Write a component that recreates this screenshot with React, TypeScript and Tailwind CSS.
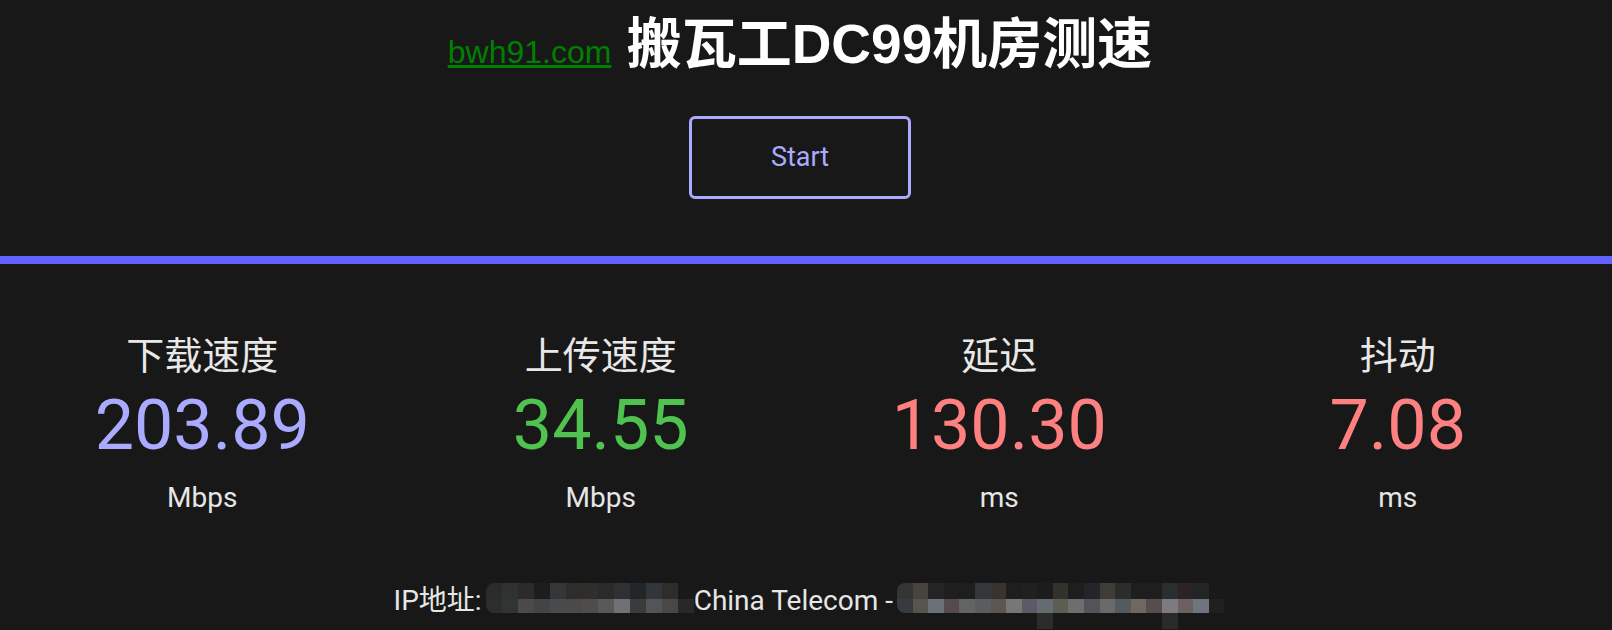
import React from "react";

const STATS = [
  { label: "下载速度", value: "203.89", unit: "Mbps", color: "text-[#aaaaff]" },
  { label: "上传速度", value: "34.55", unit: "Mbps", color: "text-[#4fc24f]" },
  { label: "延迟", value: "130.30", unit: "ms", color: "text-[#ff8080]" },
  { label: "抖动", value: "7.08", unit: "ms", color: "text-[#ff8080]" },
];

// pixelated (redacted) blocks in the IP line
const MOSAIC_IP = {
  top: ["#2a2b2b", "#303131", "#2b2b2b", "#1d1d1d", "#34373a", "#2e2d2c", "#302e2b", "#2a2a2a", "#2f3033", "#232627", "#32353a", "#2f2d2b", "#191919"],
  bot: ["#2c2e2e", "#303434", "#4d4947", "#434446", "#494a4c", "#4a4a4a", "#4f4d4b", "#595959", "#707174", "#3b3b3b", "#51555a", "#4a4846", "#272929"],
};

const MOSAIC_ISP = {
  top: ["#333536", "#47443e", "#232525", "#1f1f1f", "#1e1e1e", "#33373a", "#383230", "#1e1e1c", "#20201e", "#1c1c1c", "#31322c", "#1e1e1e", "#24252a", "#3d3c36", "#2c2c2c", "#1e1e1e", "#1e1e1e", "#2b2e30", "#2c2424", "#222426", "#191919"],
  bot: ["#363b3f", "#57534d", "#6c7178", "#574a4c", "#606564", "#5b5c5e", "#5e5550", "#777777", "#5c5a66", "#636c70", "#5d5d52", "#6e6e6e", "#56525a", "#6a6a6a", "#535a60", "#6e6860", "#574c4e", "#7c7c80", "#6c6062", "#6e757c", "#22201e"],
  under: { 9: "#2c2c2c", 17: "#2a2a2a" } as Record<number, string>,
};

function Mosaic({ top, bot, under, tile }: { top: string[]; bot: string[]; under?: Record<number, string>; tile: string }) {
  return (
    <div className="flex flex-col">
      <div className="flex flex-col overflow-hidden rounded-l-[8px]">
        <div className="flex h-[16px]">
          {top.map((c, i) => (
            <div key={i} className={tile} style={{ backgroundColor: c }} />
          ))}
        </div>
        <div className="flex h-[14px]">
          {bot.map((c, i) => (
            <div key={i} className={tile} style={{ backgroundColor: c }} />
          ))}
        </div>
      </div>
      {under && (
        <div className="flex h-[16px]">
          {top.map((_, i) => (
            <div key={i} className={tile} style={{ backgroundColor: under[i] ?? "transparent" }} />
          ))}
        </div>
      )}
    </div>
  );
}

export default function App() {
  return (
    <div className="min-h-screen overflow-hidden bg-[#181818] font-['Roboto','Noto_Sans_CJK_SC',sans-serif] text-[#e6e6e6]">
      <div className="w-[1600px]">
        <h1 className="h-[72px] pt-[16px] text-center font-['Liberation_Sans','Noto_Sans_CJK_SC',sans-serif] text-[55px] leading-[56px] font-bold text-white">
          <a href="#" className="text-[32px] leading-[32px] font-normal text-[#008000] underline">bwh91.com</a> 搬瓦工DC99机房测速
        </h1>
        <div className="mt-[44px] flex justify-center">
          <button className="h-[83px] w-[222px] rounded-[6px] border-[3px] border-[#aaaaff] text-[27px] text-[#aaaaff]">
            Start
          </button>
        </div>
      </div>

      <div className="mt-[57px] h-[8px] bg-[#6262ff]" />

      {/* Results */}
      <div className="mt-[73px] grid w-[1600px] grid-cols-4 px-[3px]">
        {STATS.map((s) => (
          <div key={s.label} className="flex flex-col items-center text-center">
            <div className="text-[38px] leading-[38px] text-[#e8e8e8]">{s.label}</div>
            <div className={`mt-[15px] text-[70px] leading-[70px] ${s.color}`}>{s.value}</div>
            <div className="mt-[24px] text-[28px] leading-[28px] text-[#e6e6e6]">{s.unit}</div>
          </div>
        ))}
      </div>

      {/* IP info */}
      <div className="mt-[71px] flex w-[1612px] items-start justify-center pl-[6px] text-[28px] leading-[28px] text-[#e6e6e6]">
        <span className="mt-[4px]">IP地址:</span>
        <div className="ml-[4px]">
          <Mosaic top={MOSAIC_IP.top} bot={MOSAIC_IP.bot} tile="w-[16px]" />
        </div>
        <span className="mt-[4px] whitespace-pre">China Telecom -</span>
        <div className="ml-[4px]">
          <Mosaic top={MOSAIC_ISP.top} bot={MOSAIC_ISP.bot} under={MOSAIC_ISP.under} tile="w-[15.6px]" />
        </div>
      </div>
    </div>
  );
}
